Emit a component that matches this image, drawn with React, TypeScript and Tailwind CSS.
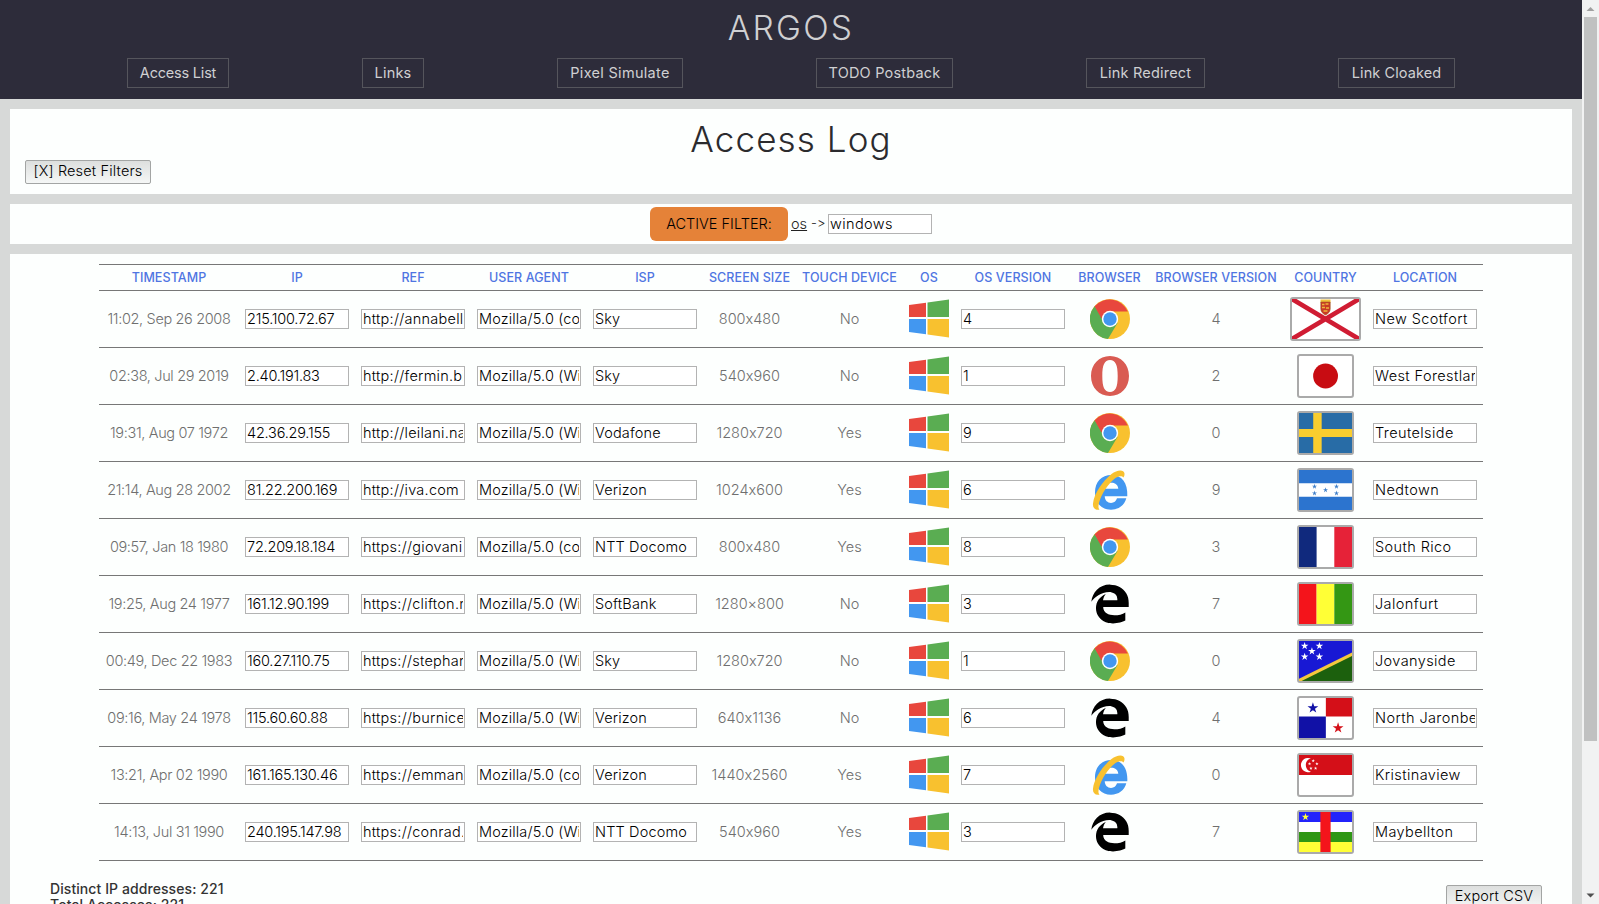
import React from "react";
import { FaEdgeLegacy } from "react-icons/fa";

type Browser = "chrome" | "opera" | "ie" | "edge";

interface Access {
  time: string;
  ip: string;
  ref: string;
  agent: string;
  isp: string;
  screen: string;
  touch: string;
  osVersion: string;
  browser: Browser;
  browserVersion: string;
  country: string;
  location: string;
}

const COMPATIBLE = "Mozilla/5.0 (compatible)";
const WINDOWS = "Mozilla/5.0 (Windows)";

const rows: Access[] = [
  { time: "11:02, Sep 26 2008", ip: "215.100.72.67", ref: "http://annabelle.com", agent: COMPATIBLE, isp: "Sky", screen: "800x480", touch: "No", osVersion: "4", browser: "chrome", browserVersion: "4", country: "je", location: "New Scotfort" },
  { time: "02:38, Jul 29 2019", ip: "2.40.191.83", ref: "http://fermin.biz", agent: WINDOWS, isp: "Sky", screen: "540x960", touch: "No", osVersion: "1", browser: "opera", browserVersion: "2", country: "jp", location: "West Forestland" },
  { time: "19:31, Aug 07 1972", ip: "42.36.29.155", ref: "http://leilani.name", agent: WINDOWS, isp: "Vodafone", screen: "1280x720", touch: "Yes", osVersion: "9", browser: "chrome", browserVersion: "0", country: "se", location: "Treutelside" },
  { time: "21:14, Aug 28 2002", ip: "81.22.200.169", ref: "http://iva.com", agent: WINDOWS, isp: "Verizon", screen: "1024x600", touch: "Yes", osVersion: "6", browser: "ie", browserVersion: "9", country: "hn", location: "Nedtown" },
  { time: "09:57, Jan 18 1980", ip: "72.209.18.184", ref: "https://giovani.com", agent: COMPATIBLE, isp: "NTT Docomo", screen: "800x480", touch: "Yes", osVersion: "8", browser: "chrome", browserVersion: "3", country: "fr", location: "South Rico" },
  { time: "19:25, Aug 24 1977", ip: "161.12.90.199", ref: "https://clifton.name", agent: WINDOWS, isp: "SoftBank", screen: "1280×800", touch: "No", osVersion: "3", browser: "edge", browserVersion: "7", country: "gn", location: "Jalonfurt" },
  { time: "00:49, Dec 22 1983", ip: "160.27.110.75", ref: "https://stephany.com", agent: WINDOWS, isp: "Sky", screen: "1280x720", touch: "No", osVersion: "1", browser: "chrome", browserVersion: "0", country: "sb", location: "Jovanyside" },
  { time: "09:16, May 24 1978", ip: "115.60.60.88", ref: "https://burnice.com", agent: WINDOWS, isp: "Verizon", screen: "640x1136", touch: "No", osVersion: "6", browser: "edge", browserVersion: "4", country: "pa", location: "North Jaronberg" },
  { time: "13:21, Apr 02 1990", ip: "161.165.130.46", ref: "https://emmanuel.com", agent: COMPATIBLE, isp: "Verizon", screen: "1440x2560", touch: "Yes", osVersion: "7", browser: "ie", browserVersion: "0", country: "sg", location: "Kristinaview" },
  { time: "14:13, Jul 31 1990", ip: "240.195.147.98", ref: "https://conrad.com", agent: WINDOWS, isp: "NTT Docomo", screen: "540x960", touch: "Yes", osVersion: "3", browser: "edge", browserVersion: "7", country: "cf", location: "Maybellton" },
];

const headings = ["TIMESTAMP", "IP", "REF", "USER AGENT", "ISP", "SCREEN SIZE", "TOUCH DEVICE", "OS", "OS VERSION", "BROWSER", "BROWSER VERSION", "COUNTRY", "LOCATION"];
const links = [
  { label: "Access List", width: "w-[102px] tracking-[-0.200px]" },
  { label: "Links", width: "w-[62px] tracking-[0.200px]" },
  { label: "Pixel Simulate", width: "w-[126px] tracking-[0.300px]" },
  { label: "TODO Postback", width: "w-[137px] tracking-[0.200px]" },
  { label: "Link Redirect", width: "w-[119px] tracking-[0.200px]" },
  { label: "Link Cloaked", width: "w-[117px] tracking-[0.100px]" },
];

const GRID = "grid grid-cols-[140px_116px_116px_116px_116px_93px_107px_52px_116px_77px_136px_83px_116px] items-center justify-items-center border-b border-[#777]";

function WindowsLogo() {
  return (
    <svg className="size-10" viewBox="0 0 40 40">
      <path fill="#e8473d" d="M0 6 17 3.7V18H0z" />
      <path fill="#5aad52" d="M18.5 3.4 40 .5V18H18.5z" />
      <path fill="#4297f0" d="M0 20h17v15.2L0 33z" />
      <path fill="#f8c12f" d="M18.5 20H40v18.5l-21.5-2.9z" />
    </svg>
  );
}

function BrowserLogo({ name }: { name: Browser }) {
  if (name === "edge") return <FaEdgeLegacy className="size-10 scale-x-[1.04] text-black" />;
  if (name === "opera")
    return (
      <svg className="size-10" viewBox="0 0 40 40">
        <path fill="#d95b52" fillRule="evenodd" d="M20 0C31 0 39 8.5 39 20S31 40 20 40 1 31.500 1 20 9 0 20 0zM20 4C14.500 4 12.300 9 12.300 20S14.500 36 20 36 27.700 31 27.700 20 25.500 4 20 4z" />
      </svg>
    );
  if (name === "ie")
    return (
      <svg className="size-10" viewBox="0 0 40 40">
        <path fill="#4297f0" fillRule="evenodd" d="M37.300 26.300H14.700C15 30.500 17.500 32.900 21 32.900 24 32.900 26 31.200 27 28.300H36.300C34.500 35.300 28.600 39.700 21 39.700 11.500 39.700 5 33 5 22.500S11.500 5 21.500 5C31.500 5 38 12.500 37.300 26.300zM14.700 18.800H28.300C28 15 25.500 12.700 21.600 12.700S15.200 15 14.700 18.800z" />
        <path fill="#f8c12f" d="M9.500 39.700C5 40.500 2.500 38 3 33.500 4 24 12.500 11 21.500 4 27-.3 34-.8 34.500 3.500 34.600 5.200 34 7 33.200 7.500 32.500 5.500 29 5.700 25.500 8 18 13.500 11.500 24 9 33 8.200 36 8.200 38.500 9.500 39.700z" />
      </svg>
    );
  return (
    <svg className="size-10" viewBox="0 0 40 40">
      <circle cx="20" cy="20" r="20" fill="#f8c12f" />
      <path fill="#5aad52" d="M4.800 7A20 20 0 0 0 18 39.900L27.500 24 20 20 11.500 18z" />
      <path fill="#e8473d" d="M4.600 7.300A20 20 0 0 1 37.900 12.500H20L11.500 19.500z" />
      <circle cx="20" cy="20" r="8.200" fill="#fff" />
      <circle cx="20" cy="20" r="6.700" fill="#4297f0" />
    </svg>
  );
}

function Star({ x, y, r, fill }: { x: number; y: number; r: number; fill: string }) {
  return (
    <path
      fill={fill}
      transform={`translate(${x} ${y}) scale(${r})`}
      d="M0-1 .225-.309.951-.309.363.118.588.809 0 .382-.588.809-.363.118-.951-.309-.225-.309z"
    />
  );
}

function flagArt(code: string) {
  switch (code) {
    case "je":
      return (
        <>
          <path stroke="#d01c33" strokeWidth="4.600" d="M-2-1.200 69 41.200M69-1.200-2 41.200" />
          <path fill="#f3c23b" d="M28.500.5h10v3h-10z" />
          <path fill="#c93a26" stroke="#9e5a20" strokeWidth=".6" d="M28.800 3h9.400v7c0 3-2 4.600-4.700 6-2.700-1.400-4.700-3-4.700-6z" />
          <path stroke="#eeb63a" strokeWidth="1.300" d="M30 5.500h2.500M33.500 5h3M30 8.500h3M34 9h3M31.500 12h4" />
        </>
      );
    case "jp":
      return <circle cx="26.700" cy="20" r="12.500" fill="#c80c12" />;
    case "se":
      return <><path fill="#286ca6" d="M0 0h54v40H0z" /><path fill="#f9cd2f" d="M14.300 0h8.500v40h-8.500zM0 16h54v8H0z" /></>;
    case "hn":
      return (
        <>
          <path fill="#2c74cf" d="M0 0h54v13.300H0zM0 26.700h54V40H0z" />
          <Star x={15.600} y={16.500} r={2.700} fill="#3f7fc9" /><Star x={15.600} y={23.300} r={2.700} fill="#3f7fc9" />
          <Star x={26.700} y={20} r={2.700} fill="#3f7fc9" />
          <Star x={37.700} y={16.500} r={2.700} fill="#3f7fc9" /><Star x={37.700} y={23.300} r={2.700} fill="#3f7fc9" />
        </>
      );
    case "fr":
      return <><path fill="#10297d" d="M0 0h17.700v40H0z" /><path fill="#e62238" d="M35.500 0H54v40H35.500z" /></>;
    case "gn":
      return <><path fill="#f4141b" d="M0 0h17.700v40H0z" /><path fill="#ffff36" d="M17.700 0h17.800v40H17.700z" /><path fill="#349714" d="M35.500 0H54v40H35.500z" /></>;
    case "sb":
      return (
        <>
          <path fill="#1818d4" d="M0 0h54v40H0z" />
          <path fill="#1c600d" d="M54 12v28H0z" />
          <path stroke="#f4c83e" strokeWidth="3.200" d="M-1 40 55 12.500" />
          <Star x={5.700} y={5} r={4} fill="#fff" /><Star x={20.500} y={5} r={4} fill="#fff" />
          <Star x={13} y={10.300} r={4} fill="#fff" />
          <Star x={5.700} y={15.800} r={4} fill="#fff" /><Star x={20.500} y={15.800} r={4} fill="#fff" />
        </>
      );
    case "pa":
      return (
        <>
          <path fill="#d40f18" d="M27 0h27v18.500H27z" />
          <path fill="#1111a6" d="M0 18.500h27V40H0z" />
          <Star x={14} y={10} r={5.700} fill="#1111a6" /><Star x={39.300} y={30} r={5.700} fill="#d40f18" />
        </>
      );
    case "sg":
      return (
        <>
          <path fill="#d40f18" d="M0 0h54v20H0z" />
          <path fill="#fff" d="M12 3.500a7.200 7.200 0 1 0 0 13.200 6.800 6.800 0 0 1 0-13.200z" />
          <Star x={14.300} y={5.800} r={1.800} fill="#fff" /><Star x={10.600} y={8.800} r={1.800} fill="#fff" />
          <Star x={18} y={8.800} r={1.800} fill="#fff" /><Star x={12} y={13.300} r={1.800} fill="#fff" />
          <Star x={16.700} y={13.300} r={1.800} fill="#fff" />
        </>
      );
    default:
      return (
        <>
          <path fill="#2323fb" d="M0 0h54v10H0z" />
          <path fill="#2f9714" d="M0 20h54v10H0z" />
          <path fill="#ffff36" d="M0 30h54v10H0z" />
          <path fill="#f4141b" d="M21.500 0h10.300v40H21.500z" />
          <Star x={6.500} y={5} r={3.900} fill="#ffff36" />
        </>
      );
  }
}

function Flag({ code }: { code: string }) {
  const wide = code === "je";
  return (
    <span className="block rounded-[3px] border-2 border-[#aaa] bg-white">
      <svg className={wide ? "h-10 w-[67px]" : "h-10 w-[53px]"} viewBox={wide ? "0 0 67 40" : "0 0 53.300 40"} preserveAspectRatio="none">
        {flagArt(code)}
      </svg>
    </span>
  );
}

function Field({ value, spacing = "tracking-[0.150px]" }: { value: string; spacing?: string }) {
  return (
    <input
      defaultValue={value}
      className={`block h-5 w-[104px] border border-[#b3b3b3] bg-white pr-[1px] pb-[2px] pl-[1px] text-[14.5px] leading-[16px] font-light text-black outline-none ${spacing}`}
    />
  );
}

export default function App() {
  return (
    <div className="flex h-[904px] w-[1599px] overflow-hidden bg-[#d7d9d8] font-['Inter','Liberation_Sans',sans-serif] [font-feature-settings:'calt'_0]">
      <div className="flex w-[1582px] flex-col">
        <header className="flex h-[99px] flex-none flex-col items-center bg-[#2d2c3a] text-[#d0d0d2]">
          <h1 className="h-[58px] pt-[8px] text-[33.500px] leading-[41px] font-light tracking-[2.200px]">ARGOS</h1>
          <nav className="flex w-full justify-between px-[127px]">
            {links.map((l) => (
              <a key={l.label} className={`flex h-[30px] items-center justify-center border border-[#55555c] text-[14.5px] whitespace-nowrap ${l.width}`}>
                {l.label}
              </a>
            ))}
          </nav>
        </header>

        <div className="flex flex-1 flex-col gap-[10px] px-[10px] pt-[10px]">
          <section className="h-[85px] flex-none bg-[#fdfffe] px-[15px]">
            <h2 className="h-[51px] pt-[9px] text-center text-[35px] leading-[43px] font-light tracking-[1.100px] text-[#2b2b2e]">Access Log</h2>
            <button className="block h-[24px] w-[126px] rounded-[2px] border border-[#a3a5a4] bg-linear-to-b from-[#dddfde] to-[#f5f7f6] pb-[2px] text-[14.5px] leading-[20px] font-light tracking-[0.150px] whitespace-nowrap text-black">
              [X] Reset Filters
            </button>
          </section>

          <section className="flex h-[40px] flex-none items-center justify-center bg-[#fdfffe] text-[14.5px] font-light text-[#222]">
            <span className="flex h-[34px] w-[138px] items-center justify-center rounded-[6px] bg-[#e58238] text-black">ACTIVE FILTER:</span>
            <span className="w-[20px] pl-[3px] underline">os</span>
            <span className="w-[20px] pl-[3px] text-[13px]">-&gt;</span>
            <Field value="windows" spacing="tracking-[0.400px]" />
          </section>

          <section className="flex flex-1 flex-col bg-[#fdfffe] pt-[10px]">
            <div className="ml-[89px] w-[1384px] border-t border-[#777]">
              <div className={`${GRID} h-[26px] pt-[2px] text-[12.500px] font-medium tracking-[0.080px] whitespace-nowrap text-[#4f75e2]`}>
                {headings.map((h) => <span key={h}>{h}</span>)}
              </div>
              {rows.map((r) => (
                <div key={r.time} className={`${GRID} h-[57px] text-[14.5px] font-light whitespace-nowrap text-[#6f6f6f]`}>
                  <span className="tracking-[-0.350px]">{r.time}</span>
                  <Field value={r.ip} spacing="tracking-[-0.220px]" />
                  <Field value={r.ref} spacing="tracking-[0.250px]" />
                  <Field value={r.agent} spacing="tracking-[0.150px]" />
                  <Field value={r.isp} />
                  <span>{r.screen}</span>
                  <span>{r.touch}</span>
                  <WindowsLogo />
                  <Field value={r.osVersion} />
                  <BrowserLogo name={r.browser} />
                  <span>{r.browserVersion}</span>
                  <Flag code={r.country} />
                  <Field value={r.location} spacing="tracking-[0.400px]" />
                </div>
              ))}
            </div>
            <div className="flex h-[43px] justify-between overflow-hidden pr-[30px] pl-[40px]">
              <div className="pt-[20px] text-[14px] leading-[16px] font-medium tracking-[0.080px] text-[#333]">
                <p>Distinct IP addresses: 221</p>
                <p>Total Accesses: 221</p>
              </div>
              <button className="mt-[24px] h-[24px] w-[96px] rounded-[2px] border border-[#a3a5a4] bg-linear-to-b from-[#dddfde] to-[#f5f7f6] pb-[2px] text-[14.5px] leading-[20px] font-light tracking-[0.150px] text-black">
                Export CSV
              </button>
            </div>
          </section>
        </div>
      </div>

      <div className="flex w-[17px] flex-col items-center bg-[#f1f2f2]">
        <svg className="h-[17px] w-[17px] flex-none" viewBox="0 0 17 17"><path fill="#a0a0a0" d="M4.500 11h8l-4-4z" /></svg>
        <div className="h-[724px] w-[13px] bg-[#c0c1c1]" />
        <svg className="mt-auto h-[17px] w-[17px] flex-none" viewBox="0 0 17 17"><path fill="#505050" d="M4.500 6.500h8l-4 4z" /></svg>
      </div>
    </div>
  );
}
